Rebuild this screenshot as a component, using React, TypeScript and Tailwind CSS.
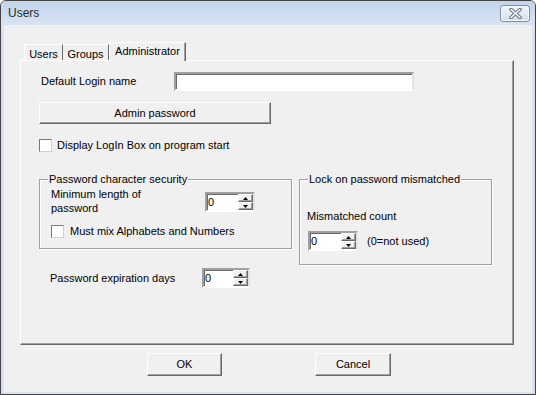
const raised =
  "border border-t-white border-l-white border-b-[#696969] border-r-[#696969] shadow-[inset_-1px_-1px_0_#a0a0a0]";
const sunken =
  "border-2 border-t-[#a0a0a0] border-l-[#a0a0a0] border-b-white border-r-[#e3e3e3] shadow-[inset_1px_1px_0_#696969]";

const Arrow = ({ up }: { up?: boolean }) => (
  <svg width="5" height="3" viewBox="0 0 5 3">
    <polygon points={up ? "2.5,0 5,3 0,3" : "0,0 5,0 2.5,3"} fill="#000" />
  </svg>
);

const Spinner = ({ w = "w-[50px]" }: { w?: string }) => (
  <div className={`flex h-[20px] ${w} bg-white ${sunken}`}>
    <span className="flex-1 pl-[1px] leading-[16px]">0</span>
    <div className="flex w-[15px] flex-col">
      <div className={`flex h-[8px] items-center justify-center bg-[#f0f0f0] ${raised}`}>
        <Arrow up />
      </div>
      <div className={`flex h-[8px] items-center justify-center bg-[#f0f0f0] ${raised}`}>
        <Arrow />
      </div>
    </div>
  </div>
);

const Checkbox = () => (
  <div className="h-[13px] w-[13px] border border-t-[#7a7a7a] border-l-[#7a7a7a] border-b-[#d0d0d0] border-r-[#d0d0d0] bg-white" />
);

const GroupBox = ({ title, className, children }: { title: string; className: string; children: React.ReactNode }) => (
  <div className={`relative border border-[#a0a0a0] shadow-[inset_1px_1px_0_#fff,1px_1px_0_#fff] ${className}`}>
    <span className="absolute -top-[8px] left-[8px] bg-[#f0f0f0] px-[1px] leading-[14px]">{title}</span>
    {children}
  </div>
);

export default function App() {
  return (
    <div className="flex h-[395px] w-[536px] flex-col overflow-hidden rounded-t-[6px] border border-[#434343] bg-[#d6e2f2] font-['Liberation_Sans',Arial,sans-serif] text-[11px] text-black">
      {/* title bar */}
      <div className="flex h-[24px] items-center justify-between bg-gradient-to-b from-[#c2d4ec] to-[#d8e4f3] pl-[7px] pr-[5px]">
        <span className="text-[12px] text-[#2a2a2a]">Users</span>
        <div className="flex h-[17px] w-[30px] items-center justify-center rounded-[3px] border border-[#7d8da3] bg-gradient-to-b from-[#f2f6fb] to-[#d3deeb] shadow-[inset_0_0_0_1px_#f7f9fc]">
          <svg width="13" height="11" viewBox="0 0 13 11">
            <path d="M2 1.5 L11 9.5 M11 1.5 L2 9.5" stroke="#5c6d84" strokeWidth="3.6" strokeLinecap="round" />
            <path d="M2 1.5 L11 9.5 M11 1.5 L2 9.5" stroke="#fff" strokeWidth="1.6" strokeLinecap="round" />
          </svg>
        </div>
      </div>

      {/* client */}
      <div className="mx-[3px] mb-[2px] flex flex-1 flex-col bg-[#f0f0f0]">
        <div className="ml-[16px] mt-[17px] w-[494px]">
          {/* tabs */}
          <div className="relative z-10 -mb-[1px] flex h-[19px] items-end pl-[4px]">
            <div className="mb-[1px] h-[16px] w-[39px] border-l border-t border-r border-l-white border-t-white border-r-[#696969] pt-[2px] text-center leading-[14px]">
              Users
            </div>
            <div className="mb-[1px] h-[16px] w-[46px] border-t border-r border-t-white border-r-[#696969] pt-[2px] text-center leading-[14px]">
              Groups
            </div>
            <div className="h-[19px] w-[77px] border-l border-t border-r border-l-white border-t-white border-r-[#696969] bg-[#f0f0f0] text-center leading-[16px] shadow-[inset_-1px_0_0_#a0a0a0]">
              Administrator
            </div>
          </div>

          {/* panel */}
          <div className={`h-[285px] pl-[18px] pt-[11px] ${raised}`}>
            <div className="flex h-[19px] items-center">
              <span className="ml-[2px] w-[133px]">Default Login name</span>
              <div className={`h-[19px] w-[240px] bg-white ${sunken}`} />
            </div>

            <div className={`mt-[11px] flex h-[22px] w-[232px] items-center justify-center ${raised}`}>
              Admin password
            </div>

            <div className="mt-[15px] flex items-center gap-[5px] leading-[13px]">
              <Checkbox />
              <span>Display LogIn Box on program start</span>
            </div>

            <div className="mt-[27px] flex items-start gap-[7px]">
              <div className="flex flex-col">
                <GroupBox title="Password character security" className="h-[70px] w-[253px] pl-[11px] pt-[7px]">
                  <div className="flex items-start">
                    <span className="w-[154px] leading-[14px]">
                      Minimum length of
                      <br />
                      password
                    </span>
                    <div className="mt-[5px]">
                      <Spinner />
                    </div>
                  </div>
                  <div className="mt-[10px] flex items-center gap-[6px] leading-[13px]">
                    <Checkbox />
                    <span>Must mix Alphabets and Numbers</span>
                  </div>
                </GroupBox>
                <div className="mt-[19px] flex items-center pl-[11px]">
                  <span className="w-[152px]">Password expiration days</span>
                  <Spinner w="w-[48px]" />
                </div>
              </div>

              <GroupBox title="Lock on password mismatched" className="h-[86px] w-[193px] pl-[7px] pt-[29px]">
                <div className="leading-[14px]">Mismatched count</div>
                <div className="mt-[8px] flex items-center gap-[9px] pl-[1px]">
                  <Spinner />
                  <span>(0=not used)</span>
                </div>
              </GroupBox>
            </div>
          </div>
        </div>

        {/* buttons */}
        <div className="ml-[143px] mt-[8px] flex gap-[93px]">
          <div className={`flex h-[23px] w-[75px] items-center justify-center ${raised}`}>OK</div>
          <div className={`flex h-[23px] w-[76px] items-center justify-center ${raised}`}>Cancel</div>
        </div>
      </div>
    </div>
  );
}
